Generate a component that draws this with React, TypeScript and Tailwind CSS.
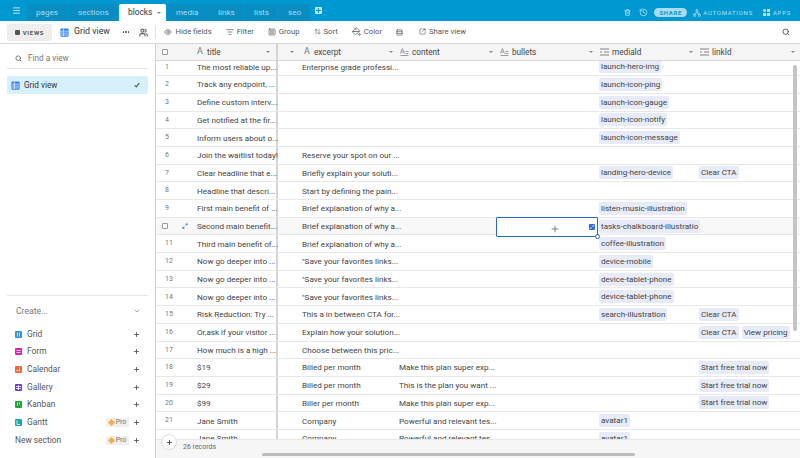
import {
  ArrowUpDown,
  ChevronDown,
  Eye,
  History,
  ListFilter,
  Menu,
  Network,
  PaintBucket,
  Plus,
  Rows3,
  Search,
  SquareArrowOutUpRight,
  SquareMenu,
  Trash2,
  Users,
} from 'lucide-react'
import type { ReactNode } from 'react'

type Row = {
  title?: string
  excerpt?: string
  content?: string
  media?: string
  links?: string[]
}

const rows: Row[] = [
  { title: 'The most reliable up...', excerpt: 'Enterprise grade professi...', media: 'launch-hero-img' },
  { title: 'Track any endpoint, ...', media: 'launch-icon-ping' },
  { title: 'Define custom interv...', media: 'launch-icon-gauge' },
  { title: 'Get notified at the fir...', media: 'launch-icon-notify' },
  { title: 'Inform users about o...', media: 'launch-icon-message' },
  { title: 'Join the waitlist today!', excerpt: 'Reserve your spot on our ...' },
  { title: 'Clear headline that e...', excerpt: 'Briefly explain your soluti...', media: 'landing-hero-device', links: ['Clear CTA'] },
  { title: 'Headline that descri...', excerpt: 'Start by defining the pain...' },
  { title: 'First main benefit of ...', excerpt: 'Brief explanation of why a...', media: 'listen-music-illustration' },
  { title: 'Second main benefit...', excerpt: 'Brief explanation of why a...', media: 'tasks-chalkboard-illustratio' },
  { title: 'Third main benefit of...', excerpt: 'Brief explanation of why a...', media: 'coffee-illustration' },
  { title: 'Now go deeper into ...', excerpt: '"Save your favorites links...', media: 'device-mobile' },
  { title: 'Now go deeper into ...', excerpt: '"Save your favorites links...', media: 'device-tablet-phone' },
  { title: 'Now go deeper into ...', excerpt: '"Save your favorites links...', media: 'device-tablet-phone' },
  { title: 'Risk Reduction: Try ...', excerpt: 'This a in between CTA for...', media: 'search-illustration', links: ['Clear CTA'] },
  { title: 'Or,ask if your visitor ...', excerpt: 'Explain how your solution...', links: ['Clear CTA', 'View pricing'] },
  { title: 'How much is a high ...', excerpt: 'Choose between this pric...' },
  { title: '$19', excerpt: 'Billed per month', content: 'Make this plan super exp...', links: ['Start free trial now'] },
  { title: '$29', excerpt: 'Billed per month', content: 'This is the plan you want ...', links: ['Start free trial now'] },
  { title: '$99', excerpt: 'Biller per month', content: 'Make this plan super exp...', links: ['Start free trial now'] },
  { title: 'Jane Smith', excerpt: 'Company', content: 'Powerful and relevant tes...', media: 'avatar1' },
  { title: 'Jane Smith', excerpt: 'Company', content: 'Powerful and relevant tes...', media: 'avatar1' },
]

const GridIcon = ({ className }: { className?: string }) => (
  <svg viewBox="0 0 12 12" className={className}>
    <rect x="0.5" y="0.5" width="11" height="11" rx="1.5" fill="#2d7ff9" />
    <path d="M1 4.2h10M1 6.8h10M1 9.3h10M4.5 1v10" stroke="#fff" strokeWidth="0.9" />
  </svg>
)

const ExpandIcon = ({ className }: { className?: string }) => (
  <svg viewBox="0 0 8 8" className={className} fill="currentColor">
    <path d="M4.6 0.5H7.5V3.4L6.4 2.4 5.2 3.6 4.4 2.8 5.6 1.6zM3.4 7.5H0.5V4.6L1.6 5.6 2.8 4.4 3.6 5.2 2.4 6.4z" />
  </svg>
)

const Caret = () => <span className="h-0 w-0 shrink-0 border-x-[2px] border-t-[2px] border-x-transparent border-t-[#888]" />

const Pill = ({ children }: { children: string }) => (
  <span className="h-[13px] shrink-0 rounded-[2px] bg-[#e7ebf7] px-[2px] text-[8.1px] leading-[13px] whitespace-nowrap text-[#444]">
    {children}
  </span>
)

const Tab = ({ label, className }: { label: string; className: string }) => (
  <div className={`flex h-[17px] items-center rounded-t-[2px] bg-[#0a8dc2] text-[8.1px] text-[#a9dcf0] ${className}`}>
    {label}
  </div>
)

const ToolButton = ({ icon, label, className }: { icon: ReactNode; label: string; className: string }) => (
  <div className={`flex items-center gap-[3px] text-[7.7px] text-[#555] ${className}`}>
    {icon}
    {label}
  </div>
)

const TextIcon = () => (
  <svg viewBox="0 0 9 8" className="h-[8px] w-[9px] shrink-0 text-[#888]" fill="none" stroke="currentColor" strokeWidth="0.8">
    <path d="M0.5 5.5 2.5 0.5 4.5 5.5M1.2 4h2.6M5.5 3.5h3M5.5 5.5h3M0.5 7.5h8" />
  </svg>
)

const LinkIcon = () => (
  <svg viewBox="0 0 9 8" className="h-[8px] w-[9px] shrink-0 text-[#666]" fill="none" stroke="currentColor" strokeWidth="0.8">
    <path d="M0 1h9M0 4h2M4 4h5M0 7h9" />
  </svg>
)

const ColumnHeader = ({ icon, label, className }: { icon: ReactNode; label: string; className: string }) => (
  <div className={`flex h-full shrink-0 items-center gap-[3px] pr-[5px] ${className}`}>
    {icon}
    <span className="flex-1 text-[8.2px] text-[#444]">{label}</span>
    <Caret />
  </div>
)

const CreateIcon = ({ color, children }: { color: string; children: ReactNode }) => (
  <svg viewBox="0 0 7 7" className={`mr-[5px] h-[7px] w-[7px] shrink-0 rounded-[1px] ${color}`} fill="none" stroke="#fff" strokeWidth="0.8">
    {children}
  </svg>
)

const CreateRow = ({ icon, label, pro }: { icon?: ReactNode; label: string; pro?: boolean }) => (
  <div className="flex h-[17.7px] items-center text-[8.4px] text-[#555]">
    {icon}
    <span className="flex-1">{label}</span>
    {pro && (
      <span className="mr-[4px] flex h-[9px] w-[23px] items-center justify-center gap-[2px] rounded-[2px] bg-[#efefef] text-[7px] text-[#777]">
        <span className="h-[5px] w-[5px] rotate-45 bg-[#f3b04a]" />
        Pro
      </span>
    )}
    <Plus size={7} strokeWidth={3} className="text-[#555]" />
  </div>
)

const App = () => {
  return (
    <div className="flex h-[458px] w-[800px] flex-col overflow-hidden bg-white font-['Roboto',sans-serif]">
      <header className="flex h-[21px] shrink-0 items-end bg-[#0098d0] pr-[9px] pl-[12px]">
        <Menu size={9} strokeWidth={2.5} className="mb-[6px] mr-[6px] text-[#c5e9f7]" />
        <div className="flex h-[17px]">
          <Tab label="pages" className="mr-px w-[41px] pl-[9px]" />
          <Tab label="sections" className="mr-px w-[49px] pl-[9px]" />
          <div className="flex h-[17px] w-[47px] items-center gap-[5px] rounded-t-[2px] bg-white pl-[9px] text-[8.3px] text-[#333]">
            blocks
            <Caret />
          </div>
          <Tab label="media" className="ml-px w-[46px] pl-[9px]" />
          <Tab label="links" className="w-[31px] pl-[5px]" />
          <Tab label="lists" className="ml-px w-[32px] pl-[9px]" />
          <Tab label="seo" className="ml-px w-[32px] pl-[10px]" />
        </div>
        <Plus size={7} strokeWidth={4} className="mb-[7px] ml-[5px] rounded-[1px] bg-[#c5e9f7] text-[#0098d0]" />
        <div className="mb-[4px] ml-auto flex items-center text-[#b5e2f4]">
          <Trash2 size={7} strokeWidth={2.5} className="mr-[8px]" />
          <History size={9} className="mr-[6px]" />
          <span className="mr-[6px] flex h-[9px] w-[33px] items-center justify-center rounded-full bg-[#a8dcf0] text-[6px] font-bold tracking-[0.7px] text-[#0098d0]">
            SHARE
          </span>
          <Network size={8} className="mr-[2px]" />
          <span className="mr-[10px] text-[6px] tracking-[0.75px]">AUTOMATIONS</span>
          <span className="mr-[3px] grid grid-cols-2 gap-[1px]">
            <span className="h-[3px] w-[3px] rounded-full bg-[#b5e2f4]" />
            <span className="h-[3px] w-[3px] bg-[#b5e2f4]" />
            <span className="h-[3px] w-[3px] bg-[#b5e2f4]" />
            <span className="h-[3px] w-[3px] bg-[#b5e2f4]" />
          </span>
          <span className="text-[6px] tracking-[0.75px]">APPS</span>
        </div>
      </header>

      <div className="flex h-[23px] shrink-0 items-center border-b border-[#d8d8d8] pr-[10px] pl-[7px]">
        <div className="mr-[8px] flex h-[17px] w-[45px] items-center justify-center gap-[3px] rounded-[2px] bg-[#eee] text-[6px] font-bold tracking-[0.7px] text-[#555]">
          <span className="h-[5px] w-[5px] rounded-[1px] bg-[#555]" />
          VIEWS
        </div>
        <GridIcon className="mr-[5px] h-[9px] w-[9px]" />
        <span className="mr-[13px] text-[8.8px] text-[#333]">Grid view</span>
        <span className="mr-[10px] flex gap-[1px]">
          <span className="h-[1.5px] w-[1.5px] rounded-full bg-[#444]" />
          <span className="h-[1.5px] w-[1.5px] rounded-full bg-[#444]" />
          <span className="h-[1.5px] w-[1.5px] rounded-full bg-[#444]" />
        </span>
        <Users size={9} strokeWidth={3} className="mr-[7px] text-[#666]" />
        <span className="mr-[8px] h-[13px] w-px bg-[#e0e0e0]" />
        <ToolButton icon={<Eye size={8} />} label="Hide fields" className="mr-[14px]" />
        <ToolButton icon={<ListFilter size={8} />} label="Filter" className="mr-[14px]" />
        <ToolButton icon={<SquareMenu size={8} />} label="Group" className="mr-[14px]" />
        <ToolButton icon={<ArrowUpDown size={7} />} label="Sort" className="mr-[14px]" />
        <ToolButton icon={<PaintBucket size={9} />} label="Color" className="mr-[14px]" />
        <Rows3 size={7} className="mr-[16px] text-[#444]" />
        <ToolButton icon={<SquareArrowOutUpRight size={7} />} label="Share view" className="" />
        <Search size={8} strokeWidth={2.5} className="ml-auto text-[#444]" />
      </div>

      <div className="flex min-h-0 flex-1">
        <aside className="flex w-[156px] shrink-0 flex-col border-r border-[#d0d0d0] px-[7px]">
          <div className="flex h-[25px] items-center gap-[6px] border-b border-[#e6e6e6] pt-[5px] pl-[8px] text-[8.2px] text-[#777]">
            <Search size={7} strokeWidth={2.5} className="text-[#555]" />
            Find a view
          </div>
          <div className="mt-[7px] flex h-[18px] items-center rounded-[2px] bg-[#d6f1fb] pr-[8px] pl-[4px] text-[8.2px] text-[#333]">
            <GridIcon className="mr-[4px] h-[9px] w-[9px]" />
            <span className="flex-1">Grid view</span>
            <svg viewBox="0 0 8 8" className="h-[6px] w-[6px] text-[#555]" fill="none" stroke="currentColor" strokeWidth="1.5">
              <path d="M1 4.5 3 6.5 7 1.5" />
            </svg>
          </div>
          <div className="mt-auto border-t border-[#e6e6e6] pb-[9px]">
            <div className="flex h-[28px] items-center justify-between pt-[2px] pr-[7px] pl-[9px] text-[8.6px] text-[#777]">
              Create...
              <ChevronDown size={8} />
            </div>
            <div className="pt-[1px] pr-[8px] pl-[8px]">
              <CreateRow
                icon={<CreateIcon color="bg-[#3b8ed8]"><path d="M2.5 1.5v4M4.5 1.5v4" /></CreateIcon>}
                label="Grid"
              />
              <CreateRow
                icon={<CreateIcon color="bg-[#e11fb0]"><path d="M1.5 2.5h4M1.5 4.5h4" /></CreateIcon>}
                label="Form"
              />
              <CreateRow
                icon={<CreateIcon color="bg-[#ef6a3c]"><path d="M1.5 4.5h2M4.5 1.5v4" /></CreateIcon>}
                label="Calendar"
              />
              <CreateRow
                icon={<CreateIcon color="bg-[#6a3cc9]"><path d="M1 2.5h5M1 4.5h5M3.5 1v5" /></CreateIcon>}
                label="Gallery"
              />
              <CreateRow
                icon={<CreateIcon color="bg-[#22a83c]"><path d="M2.5 1.5v3M4.5 1.5v2" /></CreateIcon>}
                label="Kanban"
              />
              <CreateRow
                icon={<CreateIcon color="bg-[#1ba8a8]"><path d="M2 1.5v4h3" /></CreateIcon>}
                label="Gantt"
                pro
              />
              <CreateRow label="New section" pro />
            </div>
          </div>
        </aside>

        <main className="relative min-w-0 flex-1 overflow-hidden">
          <div className="relative z-10 flex h-[17px] items-center border-b border-[#d8d8d8] bg-[#f5f5f5]">
            <div className="flex h-full w-[122px] shrink-0 items-center border-r-[2px] border-[#d4d4d4] pr-[6px]">
              <span className="mr-[29px] ml-[6px] h-[6px] w-[6px] shrink-0 rounded-[1px] border border-[#999] bg-white" />
              <span className="w-[10px] shrink-0 text-[9px] text-[#777]">A</span>
              <span className="flex-1 text-[8.2px] text-[#444]">title</span>
              <Caret />
            </div>
            <div className="flex h-full w-[120px] shrink-0 items-center pr-[5px] pl-[12px]">
              <Caret />
              <span className="ml-[10px] w-[10px] shrink-0 text-[9px] text-[#777]">A</span>
              <span className="flex-1 text-[8.2px] text-[#444]">excerpt</span>
              <Caret />
            </div>
            <ColumnHeader icon={<TextIcon />} label="content" className="w-[100px] pl-[2px]" />
            <ColumnHeader icon={<TextIcon />} label="bullets" className="w-[100px] pl-[2px]" />
            <ColumnHeader icon={<LinkIcon />} label="mediaId" className="w-[100px] pl-[2px]" />
            <ColumnHeader icon={<LinkIcon />} label="linkId" className="w-[102px] pl-[2px]" />
          </div>

          <div className="-mt-[2.5px]">
            {rows.map((row, i) => {
              const hovered = i === 9
              return (
                <div
                  key={i}
                  className={`flex h-[17.7px] items-center border-b border-[#e8e8e8] text-[8.1px] text-[#444] ${hovered ? 'bg-[#f8f8f8]' : ''}`}
                >
                  <div className="flex h-full w-[122px] shrink-0 items-center border-r-[2px] border-[#d4d4d4]">
                    {hovered ? (
                      <div className="flex w-[41px] shrink-0 items-center pl-[6px]">
                        <span className="mr-[14px] h-[6px] w-[6px] shrink-0 rounded-[1px] border border-[#999] bg-white" />
                        <ExpandIcon className="h-[6px] w-[6px] text-[#2d7ff9]" />
                      </div>
                    ) : (
                      <span className="w-[41px] shrink-0 pl-[9px] text-[7px] text-[#777]">{i + 1}</span>
                    )}
                    <span className="whitespace-nowrap">{row.title}</span>
                  </div>
                  <div className="w-[120px] shrink-0 pl-[24px] whitespace-nowrap">{row.excerpt}</div>
                  <div className="w-[100px] shrink-0 pl-[1px] whitespace-nowrap">{row.content}</div>
                  <div className="w-[100px] shrink-0" />
                  <div className="flex w-[100px] shrink-0 items-center pl-[1px]">
                    {row.media && <Pill>{row.media}</Pill>}
                  </div>
                  <div className="flex w-[102px] shrink-0 items-center gap-[3px] pl-[1px]">
                    {row.links?.map((link) => <Pill key={link}>{link}</Pill>)}
                  </div>
                </div>
              )
            })}
          </div>

          {/* selected cell, sits over the bullets column */}
          <div className="absolute top-[173px] left-[340px] z-10 flex h-[20px] w-[102px] items-center justify-end rounded-[1px] border-[1.5px] border-[#2d66c4] bg-white pr-[2px]">
            <Plus size={10} className="absolute top-[6px] left-[53px] text-[#666]" />
            <span className="flex h-[6px] w-[6px] items-center justify-center rounded-[1px] bg-[#2d6fd8] text-white">
              <ExpandIcon className="h-[4px] w-[4px]" />
            </span>
            <span className="absolute -right-[3px] -bottom-[3px] h-[5px] w-[5px] rounded-full border border-[#2d66c4] bg-white" />
          </div>

          {/* scrollbars */}
          <div className="absolute top-[21px] right-[3px] z-10 h-[266px] w-[4px] rounded-full bg-[#c4c4c4]" />

          {/* footer over the grid */}
          <div className="absolute right-0 bottom-0 left-0 z-20 h-[19px] border-t border-[#e6e6e6] bg-[#f6f6f6] pt-[2px] pl-[27px] text-[7px] text-[#666]">
            26 records
            <span className="absolute bottom-[2px] left-[106px] h-[3px] w-[373px] rounded-full bg-[#bdbdbd]" />
          </div>
          <span className="absolute bottom-[8px] left-[5px] z-30 flex h-[16px] w-[16px] items-center justify-center rounded-full border border-[#e0e0e0] bg-white">
            <Plus size={7} strokeWidth={3} className="text-[#444]" />
          </span>
        </main>
      </div>
    </div>
  )
}

export default App
